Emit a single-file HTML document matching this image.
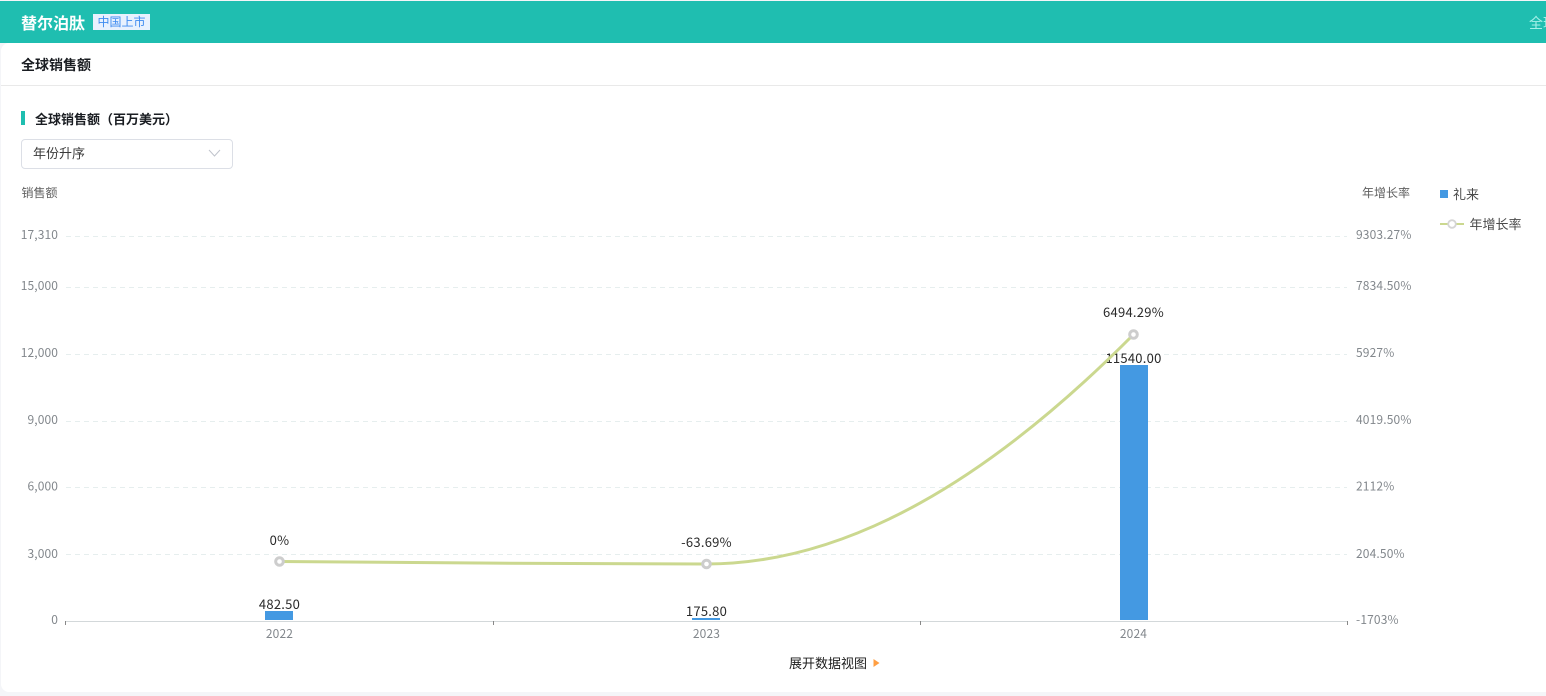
<!DOCTYPE html>
<html lang="zh">
<head>
<meta charset="utf-8">
<style>
html,body{margin:0;padding:0;width:1546px;height:696px;overflow:hidden;background:#f4f5f8;font-family:"Noto Sans CJK SC","Liberation Sans",sans-serif;}
.a{position:absolute;white-space:nowrap;}
#top{left:0;top:1px;width:1546px;height:42px;background:#1fbeb0;}
#card{left:1px;top:43px;width:1560px;height:649px;background:#fff;border-radius:8px;}
#line{left:1px;top:85px;width:1545px;height:1px;background:#e9e9e9;}
#sel{left:21px;top:139px;width:210px;height:28px;border:1px solid #dcdfe6;border-radius:4px;background:#fff;}
svg{position:absolute;left:0;top:0;}
</style>
</head>
<body>
<div class="a" id="top"></div>
<div class="a" id="card"></div>
<div class="a" id="line"></div>
<div class="a" style="left:21px;top:11px;font-size:16px;line-height:22px;font-weight:700;color:#fff;">替尔泊肽</div>
<div class="a" style="left:93px;top:14px;width:57px;height:16px;background:#e8f1fe;color:#3f8cf0;font-size:12px;line-height:16px;text-align:center;">中国上市</div>
<div class="a" style="left:1529px;top:13px;font-size:14px;line-height:20px;color:#a6f0e8;">全球</div>
<div class="a" style="left:21px;top:55px;font-size:14px;line-height:20px;font-weight:700;color:#1a1d22;">全球销售额</div>
<div class="a" style="left:21px;top:111px;width:4px;height:14px;background:#1fbeb0;"></div>
<div class="a" style="left:35px;top:109px;font-size:13px;line-height:20px;font-weight:700;color:#1a1d22;">全球销售额（百万美元）</div>
<div class="a" id="sel"></div>
<div class="a" style="left:33px;top:143px;font-size:13px;line-height:20px;color:#3a3a3a;">年份升序</div>
<svg width="1546" height="696" viewBox="0 0 1546 696" xmlns="http://www.w3.org/2000/svg" style="font-family:'Noto Sans CJK SC','Liberation Sans',sans-serif;">
  <path d="M209 150l5.500 6 5.500-6" fill="none" stroke="#c0c4cc" stroke-width="1"/>
  <g stroke="#e6eeee" stroke-width="1" stroke-dasharray="5 4">
    <path d="M66 236.500H1347M66 287.500H1347M66 354.500H1347M66 421.500H1347M66 487.500H1347M66 554.500H1347"/>
  </g>
  <path d="M65.500 621.500H1347.500" stroke="#d3d8da" stroke-width="1"/>
  <path d="M65.500 621v4M493.500 621v4M920.500 621v4M1347.500 621v4" stroke="#888" stroke-width="1"/>
  <rect x="265" y="611" width="28" height="9" fill="#4499e2"/>
  <rect x="692" y="618" width="28" height="2" fill="#4499e2"/>
  <rect x="1120" y="365" width="28" height="255" fill="#4499e2"/>
  <g font-size="12" fill="#82878c" text-anchor="end" letter-spacing="0.1">
    <text x="58" y="239">17,310</text>
    <text x="58" y="290">15,000</text>
    <text x="58" y="357">12,000</text>
    <text x="58" y="424">9,000</text>
    <text x="58" y="490.500">6,000</text>
    <text x="58" y="558">3,000</text>
    <text x="58" y="624">0</text>
  </g>
  <g font-size="12" fill="#82878c" letter-spacing="0.15">
    <text x="1356" y="239">9303.27%</text>
    <text x="1356" y="290">7834.50%</text>
    <text x="1356" y="357">5927%</text>
    <text x="1356" y="424">4019.50%</text>
    <text x="1356" y="490.500">2112%</text>
    <text x="1356" y="558">204.50%</text>
    <text x="1356" y="624">-1703%</text>
  </g>
  <g font-size="12" fill="#82878c" text-anchor="middle" letter-spacing="0.15">
    <text x="279.500" y="638">2022</text>
    <text x="706.500" y="638">2023</text>
    <text x="1133.500" y="638">2024</text>
  </g>
  <text x="21.500" y="197" font-size="12" fill="#5f5f5f">销售额</text>
  <text x="1410" y="197" font-size="12" fill="#5f5f5f" text-anchor="end">年增长率</text>
  <g font-size="13" fill="#2a2a2a" text-anchor="middle" letter-spacing="0.25">
    <text x="279.500" y="545">0%</text>
    <text x="706.500" y="547">-63.69%</text>
    <text x="1133.500" y="317">6494.29%</text>
    <text x="279.500" y="609">482.50</text>
    <text x="706.500" y="616">175.80</text>
    <text x="1133.500" y="363">11540.00</text>
  </g>
  <path d="M279.500 561.500C422 562.500 564 564 706.500 564C849 564 991 478 1133.500 334.500" fill="none" stroke="#cbd88f" stroke-width="3"/>
  <g fill="#fff" stroke="#cdcdcd" stroke-width="3">
    <circle cx="279.500" cy="561.500" r="3.800"/>
    <circle cx="706.500" cy="564" r="3.800"/>
    <circle cx="1133.500" cy="334.500" r="3.800"/>
  </g>
  <rect x="1440" y="190" width="8" height="8" fill="#4499e2"/>
  <text x="1453" y="199" font-size="13" fill="#4a4a4a">礼来</text>
  <path d="M1440 224H1464" stroke="#cbd88f" stroke-width="2"/>
  <circle cx="1452" cy="224" r="3.800" fill="#fff" stroke="#d5d5d5" stroke-width="1.800"/>
  <text x="1469.500" y="229" font-size="13" fill="#4a4a4a">年增长率</text>
  <text x="789" y="668" font-size="13" fill="#1c1c1c">展开数据视图</text>
  <path d="M873.500 659v8l6-4z" fill="#ff9f43"/>
</svg>
</body>
</html>
